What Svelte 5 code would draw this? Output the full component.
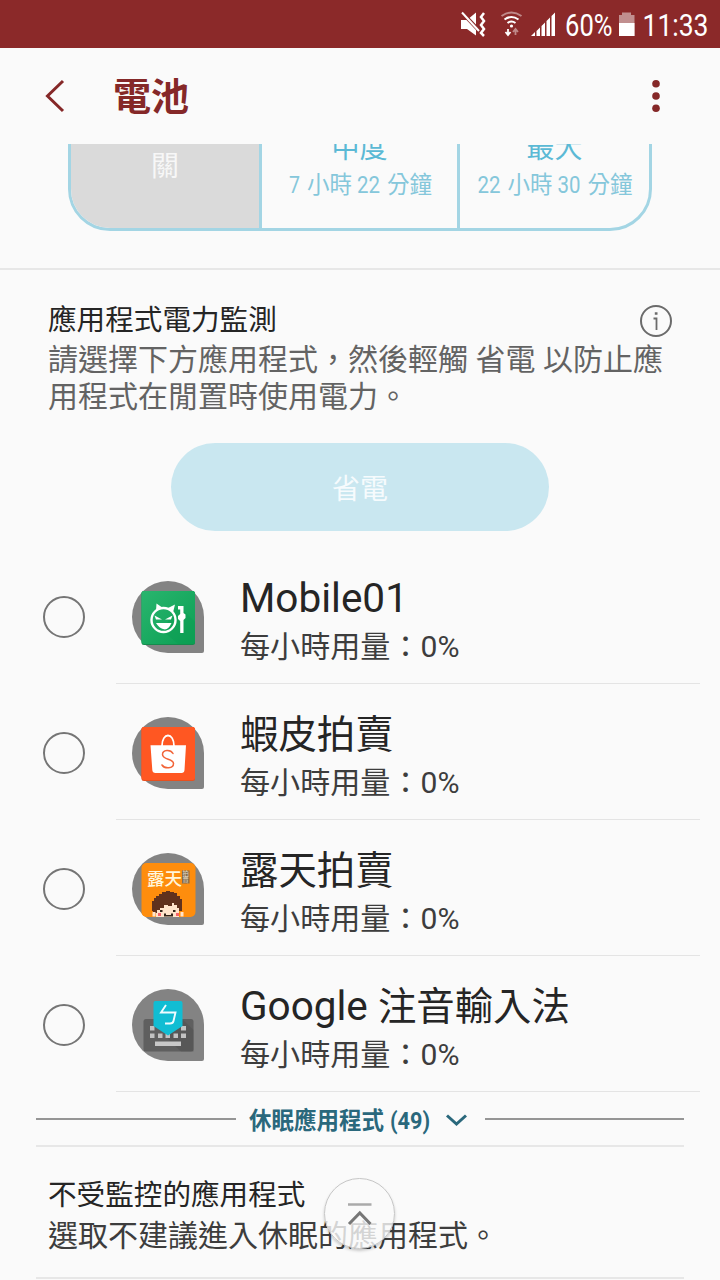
<script>
  // Narrow labels are set run by run: t = text, x = start, w = advance width
  const modes = [
    { id: 'off', name: '關', runs: [] },
    {
      id: 'mid',
      name: '中度',
      runs: [
        { t: '7', x: 26, w: 11 },
        { t: '小時', x: 44, w: 45 },
        { t: '22', x: 94, w: 23 },
        { t: '分鐘', x: 124, w: 45 },
      ],
    },
    {
      id: 'max',
      name: '最大',
      runs: [
        { t: '22', x: 19.5, w: 23 },
        { t: '小時', x: 49.5, w: 45 },
        { t: '30', x: 99.5, w: 23 },
        { t: '分鐘', x: 129.5, w: 45 },
      ],
    },
  ];

  const apps = [
    { id: 'mobile01', latin: 'Mobile01', name: '', usage: '0%' },
    { id: 'shopee', latin: '', name: '蝦皮拍賣', usage: '0%' },
    { id: 'ruten', latin: '', name: '露天拍賣', usage: '0%' },
    { id: 'zhuyin', latin: 'Google ', name: '注音輸入法', usage: '0%' },
  ];

  let activeMode = $state('off');
  let selected = $state([]);

  function toggle(id) {
    selected = selected.includes(id) ? selected.filter((s) => s !== id) : [...selected, id];
  }
</script>

{#snippet appIcon(id)}
  <svg class="app-icon" viewBox="0 0 72 72" aria-hidden="true">
    <path d="M36 0A36 36 0 0 1 72 36V70Q72 72 70 72H36A36 36 0 0 1 36 0Z" fill="#838383" />
    {#if id === 'mobile01'}
      <defs>
        <linearGradient id="green" x1="0" y1="0" x2="1" y2="1">
          <stop offset="0" stop-color="#29b56e" />
          <stop offset="1" stop-color="#0c9f54" />
        </linearGradient>
      </defs>
      <rect x="9.5" y="10" width="53.5" height="54" rx="2.5" fill="#168b4d" />
      <rect x="9.5" y="10" width="53.5" height="53" rx="2.5" fill="url(#green)" />
      <path d="M42 29L48 26L63 41V63H46L31 50Z" fill="#0b9d51" opacity=".45" />
      <circle cx="31.5" cy="39" r="12" fill="none" stroke="#fff" stroke-width="2.4" />
      <path d="M24 30L24.5 22.5L31 27ZM36 27L43 23.5L41 31.500Z" fill="#fff" />
      <path d="M22.5 34.5L30 38.5H24ZM40.5 34.5L33 38.5H39Z" fill="#fff" />
      <path d="M24 42L39.5 42Q36 50 31 48Q27 47 24 42Z" fill="#fff" />
      <path d="M46 25H51.5V32L53.5 33.5V37L51.5 39V52H48.2V40L46 38V35L48.2 33V28.5H46Z" fill="#fff" />
    {:else if id === 'shopee'}
      <rect x="9.5" y="10" width="53.5" height="54" rx="2.5" fill="#e8501f" />
      <rect x="9.5" y="10" width="53.5" height="53" rx="2.5" fill="#ff5722" />
      <path d="M30 29C30 15 42 15 42 29" fill="none" stroke="#fff" stroke-width="1.8" />
      <path d="M18.5 28.2H54L52.5 53Q52.3 56 49.5 56H23.5Q20.5 56 20.3 53Z" fill="#fff" />
      <path d="M41 36.5C38.5 32 30.5 32.5 30.5 37.5C30.5 43 41.5 41.5 41.5 46.5C41.5 52 32.5 52 30 48" fill="none" stroke="#f26438" stroke-width="1.5" stroke-linecap="round" />
    {:else if id === 'ruten'}
      <rect x="9.5" y="10" width="54" height="54" rx="5" fill="#fe8d0d" />
      <text class="ruten-name" x="15" y="31.5">露天</text>
      <rect x="50" y="17.5" width="7.5" height="13" fill="#816b4b" />
      <text class="ruten-side" x="50.6" y="23.3">拍</text>
      <text class="ruten-side" x="50.6" y="29.3">賣</text>
      <path d="M24 50H47V64H24Z" fill="#ffe4cb" />
      <path d="M21 58H20V48H22V45H24V43H27V41H30V39H34V38H38V39H42V40H45V43H48V46H50V58H47V55H45V52H42V50H40V53H36V52H32V55H28V57H25V60H21Z" fill="#60311d" />
      <path d="M28 57H30.5V59H28ZM41 57H43.5V59H41ZM32 60.5H34V62H39V60.5H41V63.5H32Z" fill="#332419" />
      <path d="M26 60H29V63H26ZM44 60H47V63H44Z" fill="#f6636b" />
      <path d="M20.5 59H23.5V63.5H20.5ZM48.5 59H51.5V63.5H48.5Z" fill="#ffe4cb" />
    {:else}
      <rect x="11.5" y="30" width="50" height="32.5" rx="2.5" fill="#5f5f5f" />
      <path d="M51 31L61.5 41V62.5H49L34 48Z" fill="#505050" opacity=".5" />
      <path d="M18 37H22.5V41.5H18ZM49 37H54V41.5H49ZM18 44.5H22.5V49H18ZM26 44.5H30.5V49H26ZM33.5 44.5H38V49H33.5ZM41.5 44.5H46V49H41.5ZM49 44.5H54V49H49Z" fill="#c2c2c2" />
      <path d="M23 52.5H49V57H23Z" fill="#c8c8c8" />
      <path d="M23.5 12H48.5Q50.5 12 50.5 14V37L36 46.5L21.5 37V14Q21.5 12 23.5 12Z" fill="#11bdd3" />
      <path d="M34 16L29 23.5L43.5 23.5L41.5 32Q41 34.5 38 34.5H33" fill="none" stroke="#effcff" stroke-width="1.9" />
    {/if}
  </svg>
{/snippet}

<div class="screen">
  <header class="status">
    <svg class="status-icons" viewBox="0 0 112 48" aria-hidden="true">
      <g fill="#fff">
        <path d="M1 20H7L16 12.5V35.5L7 29H1Z" />
        <path d="M2 12.5L19.5 31" stroke="#8b2929" stroke-width="4" />
        <path d="M2 12.5L19 31" stroke="#fff" stroke-width="2" />
        <path d="M24 13L21 17L24 21L21 25L24 29L21 33L24 36" fill="none" stroke="#fff" stroke-width="2.5" />
        <path d="M71 36L75 32V36ZM76.5 31L80 27.5V36H76.5ZM81.5 26L85 22.5V36H81.5ZM86.5 21L90 17.5V36H86.5ZM91.5 16L95 12.5V36H91.5Z" />
      </g>
      <g fill="none" stroke="#fff" stroke-width="2">
        <path d="M41.5 16Q51.5 9 61.5 16" opacity=".45" />
        <path d="M44.5 19.5Q51.5 14.5 58.5 19.5M47.5 23Q51.5 20 55.5 23" />
        <path d="M48 29V34M45.5 32L48 35L50.5 32" stroke-width="1.8" />
        <path d="M55.5 35V30M53 32L55.5 29L58 32" opacity=".45" stroke-width="1.8" />
      </g>
      <circle cx="51.5" cy="26" r="1.6" fill="#fff" />
    </svg>
    <svg class="status-text" viewBox="0 0 155 48">
      <text x="0" y="35.5" textLength="47.5" lengthAdjust="spacingAndGlyphs">60%</text>
      <path d="M54 15H57V12.5H66V15H69.5V36H54Z" fill="#c18f8f" />
      <path d="M54 23H69.5V36H54Z" fill="#fff" />
      <text x="77.5" y="35.5" textLength="66" lengthAdjust="spacingAndGlyphs">11:33</text>
    </svg>
  </header>

  <nav class="app-bar">
    <button class="icon-btn back" aria-label="返回">
      <svg width="20" height="34" viewBox="0 0 20 34"><path d="M18 2L2.5 17L18 32" fill="none" stroke="#852828" stroke-width="3" /></svg>
    </button>
    <h1>電池</h1>
    <button class="icon-btn more" aria-label="更多">
      <svg width="8" height="32" viewBox="0 0 8 32" fill="#852828"><circle cx="4" cy="3.8" r="3.8" /><circle cx="4" cy="16" r="3.8" /><circle cx="4" cy="28.2" r="3.8" /></svg>
    </button>
  </nav>

  <main>
    <section class="mode-section">
      <div class="modes">
        {#each modes as mode}
          <button class="mode {mode.id}" class:active={activeMode === mode.id} onclick={() => (activeMode = mode.id)}>
            <span>{mode.name}</span>
            {#if mode.runs.length}
              <svg class="duration" viewBox="0 0 194 30">
                {#each mode.runs as run}
                  <text x={run.x} y="21" textLength={run.w} lengthAdjust="spacingAndGlyphs">{run.t}</text>
                {/each}
              </svg>
            {/if}
          </button>
        {/each}
      </div>
    </section>

    <section class="monitor">
      <div class="heading">
        <h2>應用程式電力監測</h2>
        <svg class="info" viewBox="0 0 34 34" fill="none" stroke="#6b6b6b" stroke-width="2">
          <circle cx="17" cy="17" r="15" />
          <path d="M14.5 14.5H17.5V26" stroke-width="1.8" />
          <path d="M15.8 9.5H18.5" stroke-width="2.5" />
        </svg>
      </div>
      <p>請選擇下方應用程式，然後輕觸 省電 以防止應用程式在閒置時使用電力。</p>
      <button class="save" disabled={!selected.length}>省電</button>
    </section>

    <ul class="apps">
      {#each apps as app}
        <li>
          <button class="radio" class:checked={selected.includes(app.id)} aria-label={app.latin + app.name} onclick={() => toggle(app.id)}></button>
          <div class="app-row">
            {@render appIcon(app.id)}
            <div class="app-text">
              <span class="app-name"><span class="latin">{app.latin}</span>{app.name}</span>
              <span class="app-usage">每小時用量：{app.usage}</span>
            </div>
          </div>
        </li>
      {/each}
    </ul>

    <div class="sleeping">
      <span class="rule"></span>
      <svg class="sleeping-label" viewBox="0 0 249 40">
        <text x="13" y="29.5" textLength="135" lengthAdjust="spacingAndGlyphs">休眠應用程式</text>
        <text x="154" y="29.5" textLength="40" lengthAdjust="spacingAndGlyphs">(49)</text>
        <path d="M211 16.5L220.5 25L230 16.5" fill="none" stroke="#2a687c" stroke-width="3" />
      </svg>
      <span class="rule"></span>
    </div>

    <section class="unmonitored">
      <h2>不受監控的應用程式</h2>
      <p>選取不建議進入休眠的應用程式。</p>
    </section>
  </main>

  <button class="to-top" aria-label="回到頂端">
    <svg width="26" height="24" viewBox="0 0 26 24" fill="none">
      <path d="M1 2.5H24.5" stroke="#aaa" stroke-width="2.5" />
      <path d="M2 22L12.8 11L23.5 22" stroke="#777" stroke-width="3" />
    </svg>
  </button>
</div>

<style>
  :global(body) {
    background: #fafafa;
  }

  .screen {
    position: relative;
    display: flex;
    flex-direction: column;
    width: 720px;
    height: 1280px;
    overflow: hidden;
    background: #fafafa;
    color: #252525;
    font-family: Roboto, 'Noto Sans CJK TC', sans-serif;
  }

  button {
    padding: 0;
    border: 0;
    background: none;
    font: inherit;
    color: inherit;
  }

  h1,
  h2,
  p,
  ul {
    margin: 0;
    padding: 0;
    font-weight: 400;
  }

  .status {
    display: flex;
    flex: none;
    height: 48px;
    padding-left: 460px;
    background: #8b2929;
  }

  .status-icons {
    width: 112px;
    height: 48px;
    margin-right: -7px;
    flex: none;
  }

  .status-text {
    width: 155px;
    height: 48px;
    flex: none;
    fill: #fff;
    font-size: 31px;
  }

  .app-bar {
    display: flex;
    flex: none;
    align-items: center;
    height: 96px;
    padding: 0 60px 0 45px;
    box-sizing: border-box;
  }

  .icon-btn {
    display: flex;
  }

  h1 {
    flex: 1;
    margin-left: 48px;
    padding-top: 1px;
    font-size: 38px;
    font-weight: 700;
    line-height: 56px;
    color: #852828;
  }

  main {
    flex: 1;
    overflow: hidden;
  }

  .mode-section {
    display: flow-root;
    height: 126px;
    padding: 0 68px;
    border-bottom: 2px solid #e7e7e7;
    box-sizing: border-box;
  }

  /* The selector is scrolled partly under the app bar */
  .modes {
    display: flex;
    height: 160px;
    margin-top: -73px;
    box-sizing: border-box;
    border: 3px solid #a3d5e4;
    border-radius: 42px;
    overflow: hidden;
  }

  .mode {
    display: flex;
    flex: none;
    flex-direction: column;
    align-items: center;
    justify-content: center;
    width: 198px;
    padding-top: 31px;
    box-sizing: border-box;
    font-size: 28px;
    line-height: 36px;
    color: #5bb9d5;
  }

  .mode.off {
    width: 188px;
  }

  .mode.max {
    flex: 1;
    min-width: 0;
  }

  .mode + .mode {
    border-left: 3px solid #a3d5e4;
  }

  .mode.active {
    background: #dadada;
    color: #f7f7f7;
  }

  .duration {
    width: 194px;
    height: 30px;
    margin-top: 5px;
    flex: none;
    fill: #85c7db;
    font-size: 23.5px;
  }

  .monitor {
    display: flex;
    flex-direction: column;
    height: 278px;
    padding: 29px 48px 0;
    box-sizing: border-box;
  }

  .heading {
    display: flex;
    justify-content: space-between;
    align-items: center;
    height: 42px;
  }

  h2 {
    font-size: 28.6px;
    line-height: 42px;
  }

  .info {
    width: 34px;
    height: 34px;
    margin-right: -1px;
    margin-top: 1px;
  }

  .monitor p {
    width: 632px;
    font-size: 30px;
    line-height: 37px;
    color: #636363;
  }

  .save {
    align-self: center;
    width: 378px;
    height: 88px;
    margin-top: 28px;
    flex: none;
    border-radius: 44px;
    background: #c9e7f0;
    font-size: 28px;
    color: #f6fbfd;
  }

  .apps {
    list-style: none;
  }

  .apps li {
    display: flex;
    align-items: center;
    height: 136px;
    padding: 0 20px 0 43px;
  }

  .radio {
    width: 42px;
    height: 42px;
    margin: 2px 31px 0 0;
    flex: none;
    box-sizing: border-box;
    border: 2px solid #757575;
    border-radius: 50%;
  }

  .radio.checked {
    border-width: 10px;
    border-color: #5bb9d5;
  }

  .app-row {
    display: flex;
    flex: 1;
    align-items: center;
    height: 136px;
    padding: 3px 0 0 16px;
    box-sizing: border-box;
    border-bottom: 1px solid #e4e4e4;
  }

  .app-icon {
    width: 72px;
    height: 72px;
    margin-right: 36px;
  }

  .ruten-name {
    fill: #fff6dc;
    font-size: 17.5px;
    font-weight: 500;
  }

  .ruten-side {
    fill: #e7dcc8;
    font-size: 6.3px;
  }

  .app-text {
    display: flex;
    flex-direction: column;
    padding-top: 7px;
  }

  .app-name {
    font-size: 38.4px;
    line-height: 52px;
    white-space: pre;
  }

  .latin {
    font-size: 40.5px;
    line-height: 1;
  }

  .app-usage {
    font-size: 30.1px;
    line-height: 44px;
    color: #3d3d3d;
  }

  .sleeping {
    display: flex;
    align-items: center;
    height: 53px;
    margin: 0 36px;
    border-bottom: 2px solid #e7e7e7;
  }

  .rule {
    flex: 1;
    height: 2px;
    background: #959595;
  }

  .sleeping-label {
    width: 249px;
    height: 40px;
    flex: none;
    fill: #2a687c;
    font-size: 23.5px;
    font-weight: 700;
  }

  .unmonitored {
    height: 132px;
    margin: 0 36px;
    padding: 27px 12px 0;
    box-sizing: border-box;
    border-bottom: 2px solid #e7e7e7;
  }

  .unmonitored p {
    margin-top: -1px;
    font-size: 30px;
    line-height: 42px;
    color: #3d3d3d;
  }

  .to-top {
    position: absolute;
    left: 324px;
    top: 1178px;
    display: flex;
    align-items: center;
    justify-content: center;
    width: 71px;
    height: 71px;
    box-sizing: border-box;
    border: 1.5px solid #c6c6c6;
    border-radius: 50%;
    background: rgba(250, 250, 250, 0.8);
    box-shadow: 0 2px 3px rgba(0, 0, 0, 0.2);
  }
</style>
